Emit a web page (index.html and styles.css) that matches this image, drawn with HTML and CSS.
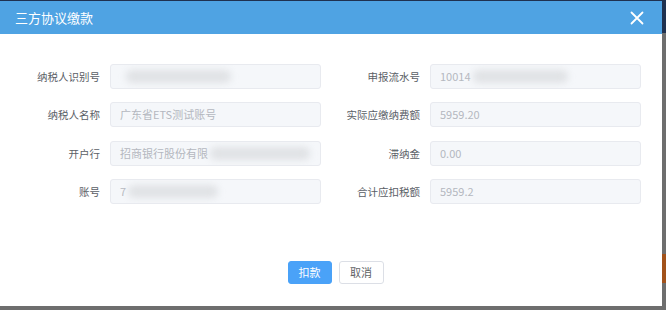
FILE: index.html
```html
<!DOCTYPE html>
<html lang="zh-CN">
<head>
  <meta charset="UTF-8" />
  <title>三方协议缴款</title>
  <link rel="stylesheet" href="styles.css">
</head>
<body>
  <!-- Dialog -->
  <div class="dialog">
    <div class="dialog-header">
      <span class="dialog-title">三方协议缴款</span>
      <svg class="dialog-close" width="14" height="14" viewBox="0 0 14 14">
        <path d="M1.5 1.5 L12.5 12.5 M12.5 1.5 L1.5 12.5" stroke="#fff" stroke-width="1.8" stroke-linecap="round"/>
      </svg>
    </div>

    <div class="dialog-body">
      <div class="form-grid">
        <label class="form-label">纳税人识别号</label>
        <div class="form-input"><span class="blur blur-a"></span></div>
        <label class="form-label">申报流水号</label>
        <div class="form-input">10014<span class="blur blur-b"></span></div>

        <label class="form-label">纳税人名称</label>
        <div class="form-input">广东省ETS测试账号</div>
        <label class="form-label">实际应缴纳费额</label>
        <div class="form-input">5959.20</div>

        <label class="form-label">开户行</label>
        <div class="form-input">招商银行股份有限<span class="blur blur-c"></span></div>
        <label class="form-label">滞纳金</label>
        <div class="form-input">0.00</div>

        <label class="form-label">账号</label>
        <div class="form-input">7<span class="blur blur-d"></span></div>
        <label class="form-label">合计应扣税额</label>
        <div class="form-input">5959.2</div>
      </div>
    </div>

    <div class="dialog-footer">
      <button class="btn btn-primary">扣款</button>
      <button class="btn">取消</button>
    </div>
  </div>
</body>
</html>
```

FILE: styles.css
```css
/* =============== PAGE =============== */
html,
body {
  margin: 0;
  padding: 0;
  width: 666px;
  height: 310px;
  overflow: hidden;
  font-family: "Noto Sans CJK SC", "Noto Sans", sans-serif;
  background:
    linear-gradient(#a2521a, #a2521a) 662px 254px / 4px 29px no-repeat,
    linear-gradient(#1f3150 0, #1f3150 33px, #6e6e6e 33px);
}

/* =============== DIALOG =============== */
.dialog {
  margin-top: 1px;
  width: 662px;
  height: 305px;
  background: #fff;
  display: flex;
  flex-direction: column;
}

.dialog-header {
  height: 33px;
  background: #4fa3e3;
  display: flex;
  align-items: center;
  justify-content: space-between;
  padding: 0 18px 0 15px;
}
.dialog-title {
  color: #fff;
  font-size: 13px;
}
.dialog-close {
  display: block;
  margin-top: 1px;
}

/* =============== FORM =============== */
.dialog-body {
  padding-top: 30px;
}
.form-grid {
  display: grid;
  grid-template-columns: 100px 221px 99px 221px;
  grid-auto-rows: 25px;
  row-gap: 13.3px;
}
.form-label {
  font-size: 10.5px;
  color: #5a5e66;
  text-align: right;
  line-height: 25px;
  white-space: nowrap;
}
.form-input {
  box-sizing: border-box;
  width: 211px;
  height: 25px;
  margin-left: 10px;
  background: #f5f7fa;
  border: 1px solid #e8eaef;
  border-radius: 3px;
  padding-left: 9px;
  font-size: 11px;
  color: #b4b8bf;
  line-height: 23px;
  white-space: nowrap;
  overflow: hidden;
  display: flex;
  align-items: center;
}

/* blurred (masked) values */
.blur {
  display: inline-block;
  height: 13px;
  background: #e0e2e5;
  filter: blur(3.5px);
  border-radius: 6px;
}
.blur-a { width: 105px; margin-left: 6px; }
.blur-b { width: 95px; margin-left: 2px; }
.blur-c { width: 100px; margin-left: 2px; }
.blur-d { width: 90px; margin-left: 2px; }

/* =============== FOOTER =============== */
.dialog-footer {
  margin-top: 57px;
  display: flex;
  justify-content: center;
  gap: 7px;
  padding-left: 9px;
}
.btn {
  height: 23px;
  min-width: 45px;
  padding: 0 10px;
  font-family: inherit;
  font-size: 11px;
  color: #606266;
  background: #fff;
  border: 1px solid #dcdfe6;
  border-radius: 3px;
}
.btn-primary {
  min-width: 43px;
  color: #fff;
  background: #4aa2f8;
  border-color: #4aa2f8;
}
```
